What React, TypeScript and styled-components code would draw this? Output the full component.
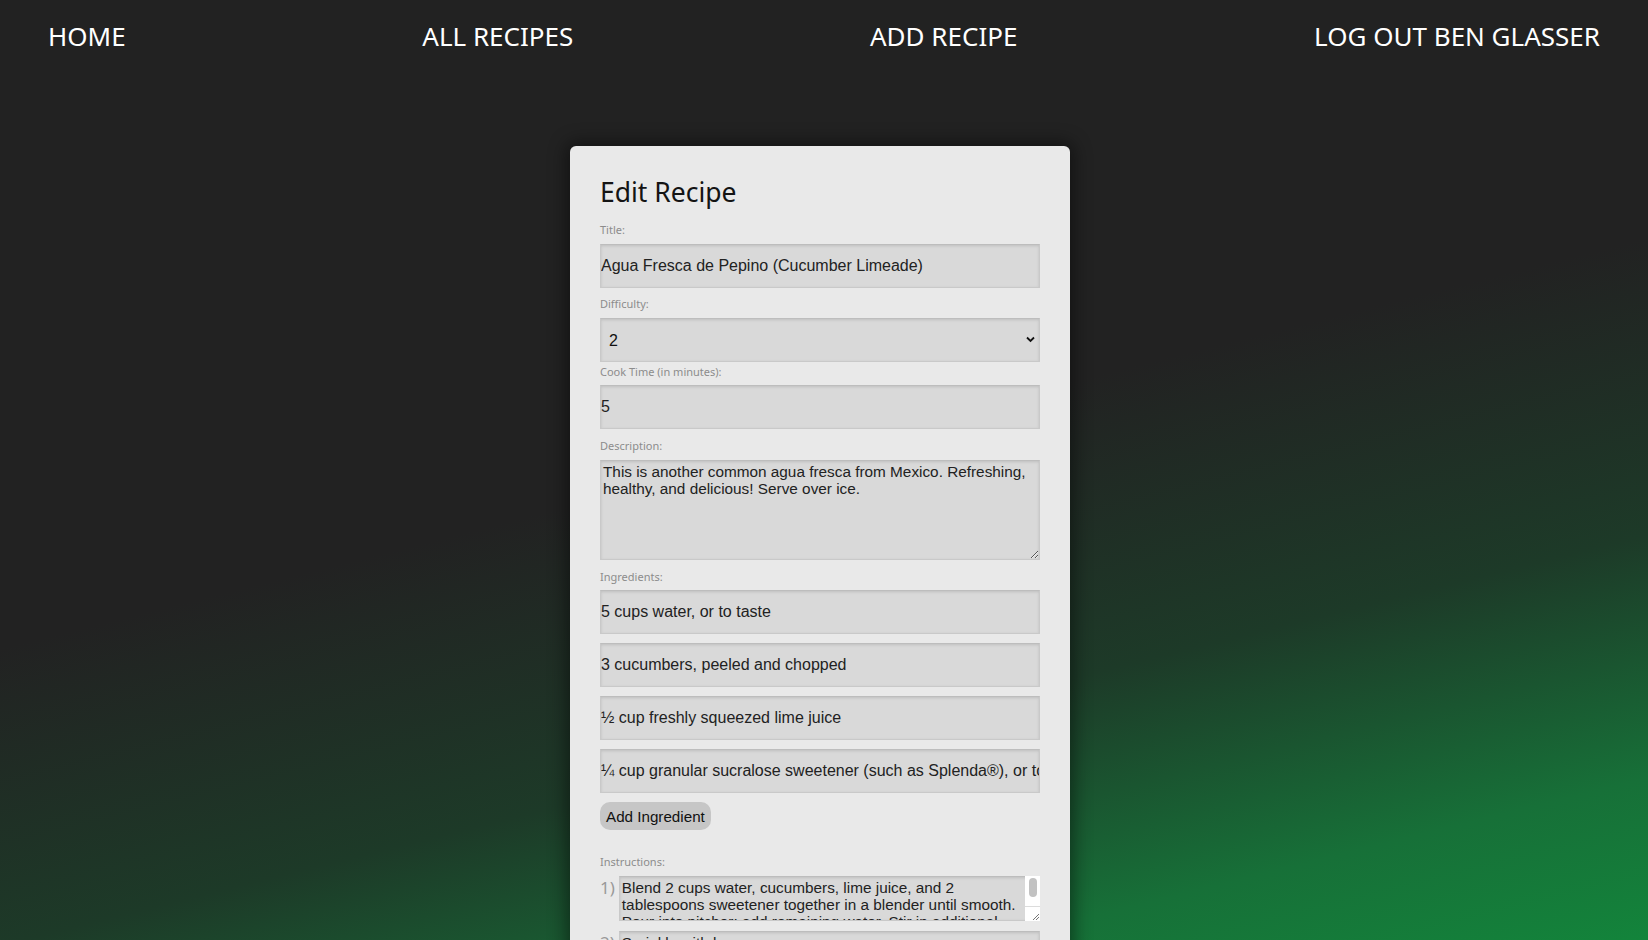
import React from "react";
import styled, { createGlobalStyle } from "styled-components";

const GlobalStyle = createGlobalStyle`
  html, body {
    margin: 0;
    padding: 0;
    background: #222222;
  }
  * { box-sizing: border-box; }
`;

const Page = styled.div`
  height: 100vh;
  overflow: hidden;
  display: flex;
  flex-direction: column;
  align-items: center;
  background: linear-gradient(166deg, #222222 48%, #1d3a28 70%, #177038 88%, #13843b 100%);
  font-family: "Noto Sans", "DejaVu Sans", sans-serif;
`;

const Nav = styled.nav`
  align-self: stretch;
  display: flex;
  justify-content: space-between;
  align-items: center;
  padding: 19px 48px 20px;
`;

const NavLink = styled.a`
  color: #ffffff;
  text-decoration: none;
  text-transform: uppercase;
  font-family: "Noto Sans", sans-serif;
  font-size: 26px;
  line-height: 35px;
  cursor: pointer;
`;

const Card = styled.form`
  width: 500px;
  margin: 72px 8px 0 0;
  flex-shrink: 0;
  background: #e9e9e9;
  border-radius: 6px;
  padding: 28px 30px 40px;
  box-shadow: 0 0 18px 4px rgba(0, 0, 0, 0.45);
  display: flex;
  flex-direction: column;
`;

const Heading = styled.h2`
  margin: 0 0 12px;
  font-family: "Noto Sans", sans-serif;
  font-weight: 400;
  font-size: 26.5px;
  line-height: 36px;
  color: #141414;
`;

const Label = styled.label`
  display: block;
  font-family: "Noto Sans", sans-serif;
  font-size: 11px;
  line-height: 16px;
  color: #8c8c8c;
  margin-bottom: 5.5px;
`;

const TextInput = styled.input<{ $gap?: number }>`
  display: block;
  width: 100%;
  height: 44.4px;
  margin: 0 0 ${(p) => (p.$gap ?? 8.6)}px;
  padding: 0;
  border: 1px solid #c9c9c9;
  border-top-color: #bdbdbd;
  background: #d9d9d9;
  box-shadow: inset 0 1px 3px rgba(0, 0, 0, 0.12);
  font-family: "Liberation Sans", Arial, sans-serif;
  font-size: 16px;
  color: #222222;
  outline: none;
`;

const SelectWrap = styled.div`
  position: relative;
  margin-bottom: 1.2px;
`;

const Select = styled.select`
  display: block;
  width: 100%;
  height: 44.4px;
  margin: 0;
  padding: 0 0 0 8px;
  appearance: none;
  -webkit-appearance: none;
  border: 1px solid #c9c9c9;
  border-top-color: #bdbdbd;
  border-radius: 0;
  background: #d9d9d9;
  box-shadow: inset 0 1px 3px rgba(0, 0, 0, 0.12);
  font-family: "Liberation Sans", Arial, sans-serif;
  font-size: 16px;
  color: #111111;
  outline: none;
`;

const Chevron = styled.svg`
  position: absolute;
  right: 5px;
  top: 18px;
  width: 9px;
  height: 7px;
  pointer-events: none;
`;

const TextArea = styled.textarea<{ $h: number; $gap?: number }>`
  display: block;
  width: 100%;
  height: ${(p) => p.$h}px;
  margin: 0 0 ${(p) => (p.$gap ?? 9)}px;
  padding: 2px 2px;
  border: 1px solid #c9c9c9;
  border-top-color: #bdbdbd;
  background: #d9d9d9;
  box-shadow: inset 0 1px 3px rgba(0, 0, 0, 0.12);
  font-family: "Liberation Sans", Arial, sans-serif;
  font-size: 15.33px;
  line-height: 17.3px;
  color: #222222;
  outline: none;
  resize: vertical;
`;

const AddButton = styled.button`
  align-self: flex-start;
  height: 28.4px;
  padding: 0 6px;
  margin: 0 0 24px;
  border: none;
  border-radius: 10px;
  background: #c6c6c6;
  font-family: "Liberation Sans", Arial, sans-serif;
  font-size: 15.2px;
  color: #111111;
  cursor: pointer;
`;

const StepRow = styled.div`
  display: flex;
  align-items: flex-start;
  gap: 4px;
  margin-bottom: 10px;
`;

const StepNumber = styled.span`
  flex-shrink: 0;
  font-family: "Noto Sans", sans-serif;
  font-size: 17px;
  line-height: 24px;
  color: #999999;
`;

const StepField = styled.div`
  position: relative;
  flex: 1;
  min-width: 0;
`;

const StepArea = styled(TextArea)<{ $scroll?: boolean }>`
  margin: 0;
  overflow: hidden;
  resize: ${(p) => (p.$scroll ? "none" : "vertical")};
  padding-right: ${(p) => (p.$scroll ? 16 : 2)}px;
`;

const ScrollStrip = styled.div`
  position: absolute;
  top: 0;
  right: 0;
  bottom: 0;
  width: 15px;
  background: #ffffff;
  display: flex;
  flex-direction: column;
  pointer-events: none;
`;

const ScrollThumb = styled.div`
  margin: 2px 3px 0 4px;
  height: 19px;
  border-radius: 4px;
  background: #c2c2c2;
`;

const ScrollCorner = styled.div`
  margin-top: auto;
  height: 15px;
  border-top: 1px solid #dcdcdc;
  display: flex;
  align-items: flex-end;
  justify-content: flex-end;
`;

const ingredients = [
  "5 cups water, or to taste",
  "3 cucumbers, peeled and chopped",
  "½ cup freshly squeezed lime juice",
  "¼ cup granular sucralose sweetener (such as Splenda®), or to taste",
];

const steps = [
  "Blend 2 cups water, cucumbers, lime juice, and 2 tablespoons sweetener together in a blender until smooth. Pour into pitcher; add remaining water. Stir in additional sweetener to taste.",
  "Sprinkle with love",
];

export default function App() {
  return (
    <>
      <GlobalStyle />
      <Page>
        <Nav>
          <NavLink>Home</NavLink>
          <NavLink>All Recipes</NavLink>
          <NavLink>Add Recipe</NavLink>
          <NavLink>Log Out Ben Glasser</NavLink>
        </Nav>
        <Card onSubmit={(e) => e.preventDefault()}>
          <Heading>Edit Recipe</Heading>
          <Label>Title:</Label>
          <TextInput defaultValue="Agua Fresca de Pepino (Cucumber Limeade)" />
          <Label>Difficulty:</Label>
          <SelectWrap>
            <Select defaultValue="2">
              <option value="1">1</option>
              <option value="2">2</option>
              <option value="3">3</option>
              <option value="4">4</option>
              <option value="5">5</option>
            </Select>
            <Chevron viewBox="0 0 9 7">
              <path d="M1 1.5 L4.5 5 L8 1.5" fill="none" stroke="#111" strokeWidth="1.8" />
            </Chevron>
          </SelectWrap>
          <Label>Cook Time (in minutes):</Label>
          <TextInput defaultValue="5" />
          <Label>Description:</Label>
          <TextArea
            $h={100}
            defaultValue="This is another common agua fresca from Mexico. Refreshing, healthy, and delicious! Serve over ice."
          />
          <Label>Ingredients:</Label>
          {ingredients.map((ing) => (
            <TextInput key={ing} defaultValue={ing} />
          ))}
          <AddButton type="button">Add Ingredient</AddButton>
          <Label>Instructions:</Label>
          {steps.map((s, i) => {
            const long = s.length > 60;
            return (
              <StepRow key={i}>
                <StepNumber>{i + 1})</StepNumber>
                <StepField>
                  <StepArea $h={45} $scroll={long} defaultValue={s} />
                  {long && (
                    <ScrollStrip>
                      <ScrollThumb />
                      <ScrollCorner>
                        <svg width="10" height="10" viewBox="0 0 10 10">
                          <path d="M9 3 L3 9 M9 6 L6 9" stroke="#777" strokeWidth="1" fill="none" />
                        </svg>
                      </ScrollCorner>
                    </ScrollStrip>
                  )}
                </StepField>
              </StepRow>
            );
          })}
          <AddButton type="button">Add Instruction</AddButton>
        </Card>
      </Page>
    </>
  );
}
